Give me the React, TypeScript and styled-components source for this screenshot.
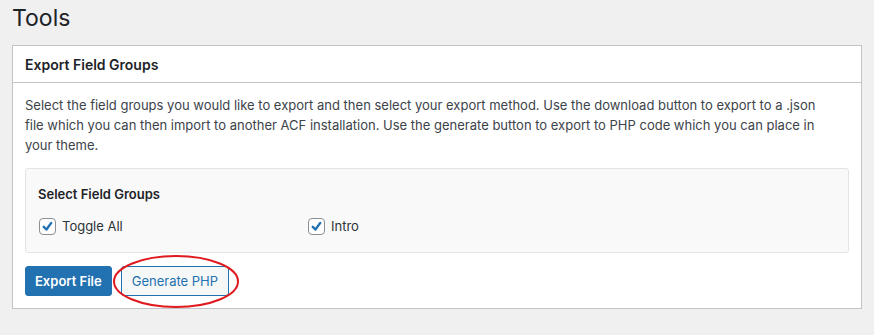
import React from 'react'
import styled, { createGlobalStyle } from 'styled-components';


/* Global */
const GlobalStyle = createGlobalStyle`
    body {
        margin: 0;
        background: #f0f0f1;
        font-family: Inter, "Liberation Sans", Arial, sans-serif;
        color: #3c434a;
    }
`;


/* Styled Components */
const Page = styled.div`
    padding: 0 12px;
    width: 850px;
`;

    const PageTitle = styled.h1`
        margin: 0;
        padding: 4px 0 12px;

        font-size: 23px;
        font-weight: 400;
        line-height: 29px;
        color: #1d2327;
    `;

    const Card = styled.div`
        background: #fff;
        border: 1px solid #c3c4c7;
        box-shadow: 0 1px 1px rgba(0, 0, 0, 0.04);
    `;

        const CardHeader = styled.div`
            height: 36px;
            padding: 0 12px;

            border-bottom: 1px solid #c3c4c7;

            display: flex;
            align-items: center;

            font-size: 14px;
            font-weight: 600;
            color: #1d2327;
        `;

        const CardBody = styled.div`
            padding: 12px;

            display: flex;
            flex-flow: column nowrap;
        `;

            const Description = styled.p`
                margin: 0 0 13px;
                max-width: 800px;

                font-size: 13px;
                line-height: 20px;
            `;

            const FieldBox = styled.div`
                padding: 17px 12px 16px;

                background: #f9f9f9;
                border: 1px solid #e4e4e6;
                border-radius: 3px;
            `;

                const FieldLabel = styled.div`
                    margin-bottom: 14px;

                    font-size: 13px;
                    font-weight: 600;
                    color: #1d2327;
                `;

                const ChoiceGrid = styled.div`
                    display: grid;
                    grid-template-columns: repeat(3, 269px);
                `;

                    const Choice = styled.label`
                        display: flex;
                        align-items: center;
                        gap: 6px;

                        font-size: 13px;
                        line-height: 20px;
                        color: #2c3338;
                    `;

                        const CheckBox = styled.span`
                            width: 17px;
                            height: 17px;
                            margin-left: 1px;

                            background: #fff;
                            border: 1px solid #8c8f94;
                            border-radius: 4px;
                            box-sizing: border-box;

                            display: flex;
                            align-items: center;
                            justify-content: center;
                        `;

            const ButtonRow = styled.div`
                margin-top: 13px;

                display: flex;
                flex-flow: row nowrap;
                gap: 9px;
            `;

                const Button = styled.button<{ $primary?: boolean }>`
                    position: relative;
                    height: 30px;
                    padding: 0 ${p => p.$primary ? 9 : 10}px;

                    background: ${p => p.$primary ? '#2271b1' : '#f6f7f7'};
                    border: 1px solid #2271b1;
                    border-radius: 3px;

                    font-family: inherit;
                    font-size: 13px;
                    color: ${p => p.$primary ? '#fff' : '#2271b1'};
                    font-weight: ${p => p.$primary ? 600 : 400};
                `;

                const Marker = styled.svg`
                    position: absolute;
                    left: -9px;
                    top: -12px;
                    pointer-events: none;
                    overflow: visible;
                `;


/* React Component */
function Check () {
    return (
        <CheckBox>
            <svg width="15" height="15" viewBox="0 0 20 20">
                <path d="M15 5.2 L8.6 14 L5 10.4" fill="none" stroke="#2271b1" strokeWidth="3.2" strokeLinecap="round" strokeLinejoin="round" />
            </svg>
        </CheckBox>
    )
}

function App () {
    return (
        <Page>
            <GlobalStyle />
            <PageTitle>Tools</PageTitle>

            <Card>
                <CardHeader>Export Field Groups</CardHeader>
                <CardBody>
                    <Description>
                        Select the field groups you would like to export and then select your export method. Use the download button to export to a .json file which you can then import to another ACF installation. Use the generate button to export to PHP code which you can place in your theme.
                    </Description>

                    <FieldBox>
                        <FieldLabel>Select Field Groups</FieldLabel>
                        <ChoiceGrid>
                            <Choice><Check /> Toggle All</Choice>
                            <Choice><Check /> Intro</Choice>
                        </ChoiceGrid>
                    </FieldBox>

                    <ButtonRow>
                        <Button $primary>Export File</Button>
                        <Button>
                            Generate PHP
                            <Marker width="126" height="53">
                                <ellipse cx="63" cy="26.5" rx="62" ry="25.5" fill="none" stroke="#e0191e" strokeWidth="2" />
                            </Marker>
                        </Button>
                    </ButtonRow>
                </CardBody>
            </Card>
        </Page>
    )
}


export default App;
